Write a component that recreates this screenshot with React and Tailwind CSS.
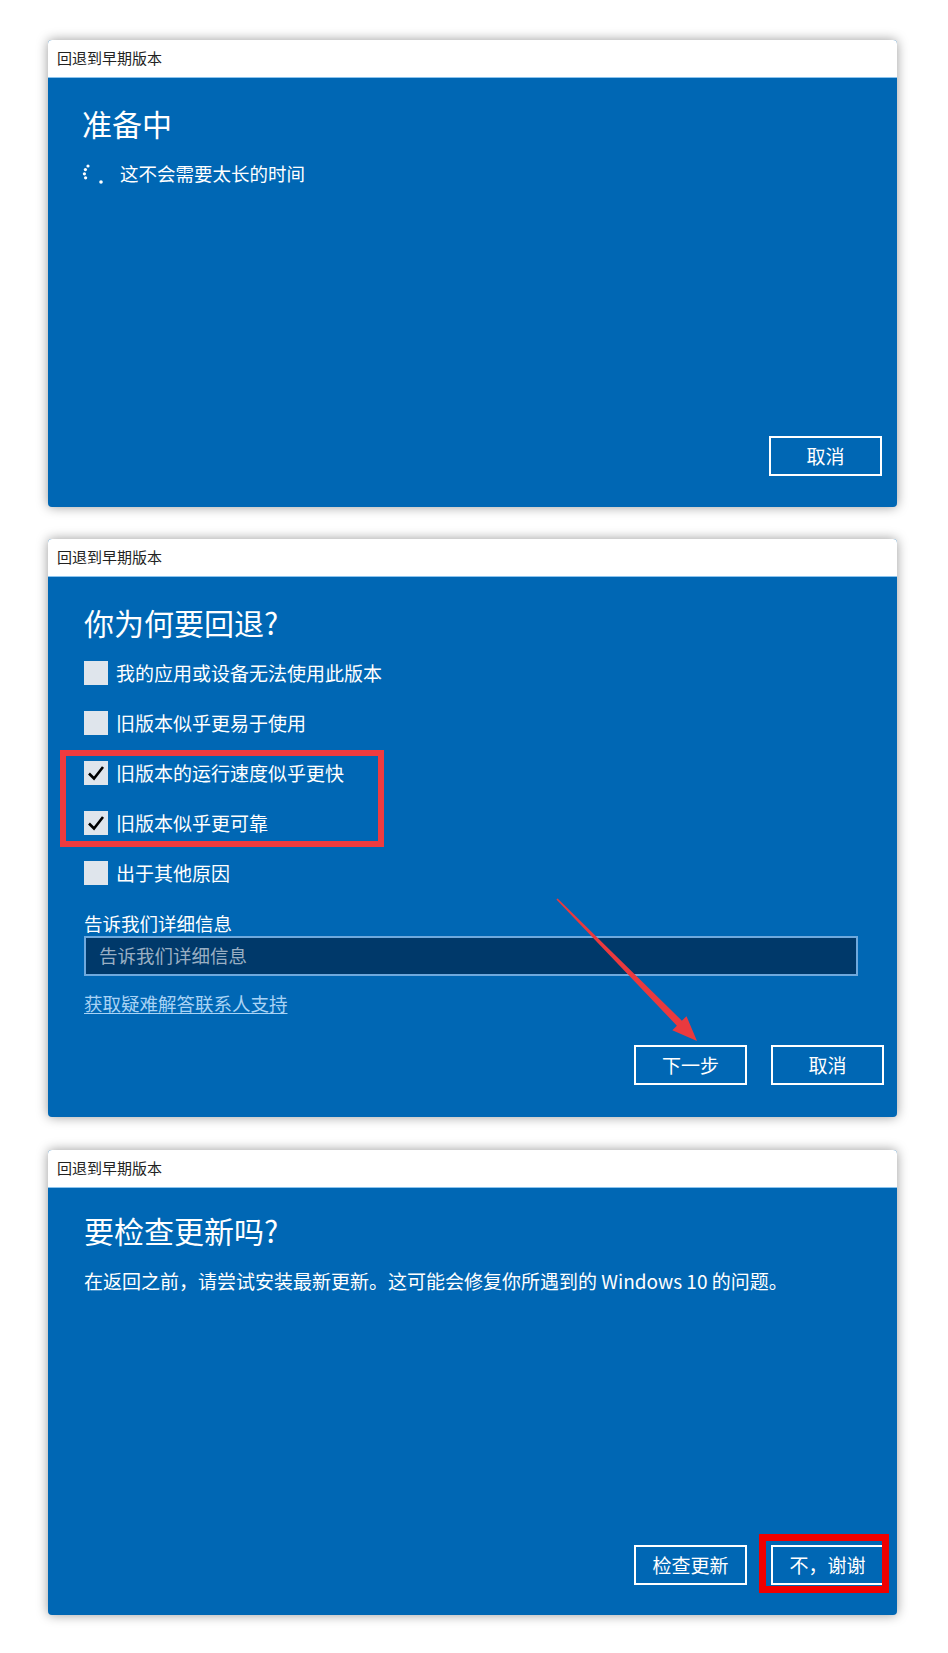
import React from 'react'

const font = "font-['Noto_Sans_CJK_SC','Noto_Sans',sans-serif]"

function TitleBar() {
  return (
    <div className="h-[38px] bg-white border-b border-[#8cc4ee] flex items-center px-[9px]">
      <span className="text-[15px] text-[#222]">回退到早期版本</span>
    </div>
  )
}

function WinButton({ children }) {
  return (
    <button className="w-[113px] h-[40px] border-2 border-white text-white text-[19px] flex items-center justify-center">
      {children}
    </button>
  )
}

function Spinner() {
  return (
    <svg width="22" height="22" viewBox="0 0 22 22" className="mr-[16px]">
      <circle cx="6" cy="3" r="1.6" fill="#fff" />
      <circle cx="3.4" cy="6.6" r="1.6" fill="#fff" />
      <circle cx="2.4" cy="10.8" r="1.6" fill="#fff" />
      <circle cx="3.6" cy="14.8" r="1.6" fill="#fff" />
      <circle cx="19" cy="19" r="1.8" fill="#fff" />
    </svg>
  )
}

function CheckRow({ label, checked }) {
  return (
    <div className="h-[50px] flex items-center">
      <div className="w-[24px] h-[24px] bg-[#dfe5ec] flex items-center justify-center mr-[8px]">
        {checked && (
          <svg width="20" height="20" viewBox="0 0 20 20">
            <path d="M3 10.5 L8 15.5 L17 4" fill="none" stroke="#000" strokeWidth="2.6" />
          </svg>
        )}
      </div>
      <span className="text-white text-[19px]">{label}</span>
    </div>
  )
}

function Panel({ children, height }) {
  return (
    <div className="rounded-[4px] overflow-hidden shadow-[0_0_12px_rgba(0,0,0,0.4)] bg-[#0067b4]">
      <TitleBar />
      <div className={'relative flex flex-col ' + height}>{children}</div>
    </div>
  )
}

export default function App() {
  return (
    <div className={'bg-white min-h-screen pt-[40px] pl-[48px] ' + font}>
      <div className="w-[849px] flex flex-col">

        {/* preparing */}
        <Panel height="h-[429px]">
          <div className="pl-[34px] pt-[25px] flex-1">
            <h1 className="text-white text-[30px] leading-[40px]">准备中</h1>
            <div className="flex items-center mt-[17px] h-[28px]">
              <Spinner />
              <span className="text-white text-[18.5px]">这不会需要太长的时间</span>
            </div>
          </div>
          <div className="flex justify-end pr-[15px] pb-[31px]">
            <WinButton>取消</WinButton>
          </div>
        </Panel>

        {/* why go back */}
        <div className="mt-[32px]">
          <Panel height="h-[540px]">
            <div className="pl-[36px] pt-[25px] flex-1">
              <h1 className="text-white text-[30px] leading-[40px]">你为何要回退?</h1>
              <div className="mt-[6px]">
                <CheckRow label="我的应用或设备无法使用此版本" />
                <CheckRow label="旧版本似乎更易于使用" />
                <div className="relative">
                  <CheckRow label="旧版本的运行速度似乎更快" checked />
                  <CheckRow label="旧版本似乎更可靠" checked />
                  <div className="absolute left-[-24px] top-[2px] w-[324px] h-[97px] border-[6px] border-[#ef3b3f]" />
                </div>
                <CheckRow label="出于其他原因" />
              </div>
              <div className="mt-[12px] text-white text-[18.5px] leading-[26px]">告诉我们详细信息</div>
              <div className="w-[774px] h-[40px] bg-[#00396a] border-2 border-[#6fa9dd] flex items-center px-[13px]">
                <span className="text-[#9aafc3] text-[18.5px]">告诉我们详细信息</span>
              </div>
              <a className="inline-block mt-[14px] text-[#a9d3f5] text-[18.5px] leading-[26px] underline underline-offset-2">
                获取疑难解答联系人支持
              </a>
            </div>
            <div className="flex justify-end gap-[24px] pr-[13px] pb-[32px]">
              <WinButton>下一步</WinButton>
              <WinButton>取消</WinButton>
            </div>
            <svg className="absolute left-[500px] top-[311px]" width="160" height="160" viewBox="0 0 160 160">
              <polygon
                points="9.6,10.4 133.9,132.7 138.5,128.2 149,153 124.3,142.2 128.9,137.7 8.4,11.6"
                fill="#ea3a3e"
              />
            </svg>
          </Panel>
        </div>

        {/* check updates */}
        <div className="mt-[33px]">
          <Panel height="h-[427px]">
            <div className="pl-[36px] pt-[22px] flex-1">
              <h1 className="text-white text-[30px] leading-[40px]">要检查更新吗?</h1>
              <p className="mt-[17px] text-white text-[19px] leading-[28px]">
                在返回之前，请尝试安装最新更新。这可能会修复你所遇到的 Windows 10 的问题。
              </p>
            </div>
            <div className="flex justify-end gap-[24px] pr-[13px] pb-[30px]">
              <WinButton>检查更新</WinButton>
              <div className="relative">
                <WinButton>不，谢谢</WinButton>
                <div className="absolute left-[-12px] top-[-11px] w-[130px] h-[59px] border-[7px] border-[#f00000]" />
              </div>
            </div>
          </Panel>
        </div>

      </div>
    </div>
  )
}
